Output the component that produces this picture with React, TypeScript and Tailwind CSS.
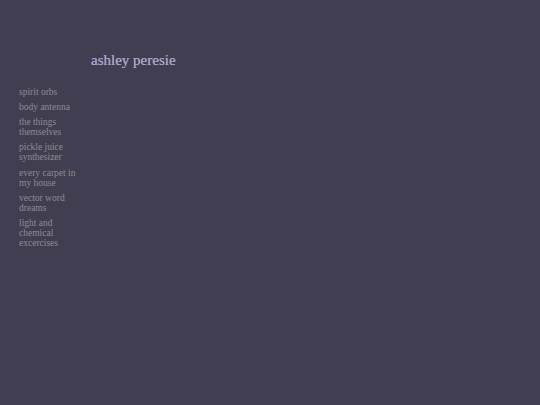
const links = [
  'spirit orbs',
  'body antenna',
  'the things themselves',
  'pickle juice synthesizer',
  'every carpet in my house',
  'vector word dreams',
  'light and chemical excercises',
];

export default function App() {
  return (
    <div className="min-h-[405px] w-full bg-[#423e52] font-['Liberation_Serif',serif]">
      <div className="pt-[51px] pl-[91px]">
        <h1 className="text-[15px] leading-[18px] text-[#aba4c6] [text-shadow:0_0_0.4px_#aba4c6]">ashley peresie</h1>
      </div>
      <nav className="mt-[18px] flex w-[60px] flex-col gap-[5px] pl-[19px] box-content">
        {links.map((l) => (
          <a key={l} className="text-[9.5px] leading-[10.1px] text-[#8d8c93]">
            {l}
          </a>
        ))}
      </nav>
    </div>
  );
}
